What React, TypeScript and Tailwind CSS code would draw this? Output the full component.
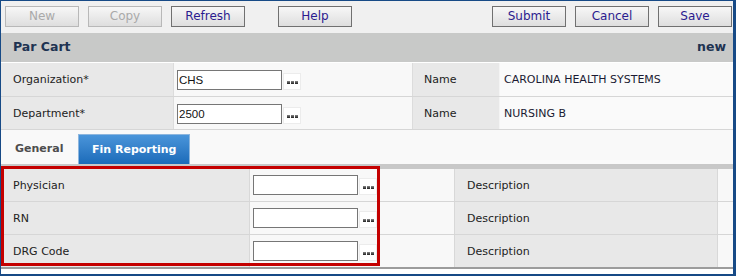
import React from "react";

const cn = (...c: (string | false | undefined)[]) => c.filter(Boolean).join(" ");

function ToolButton({ label, disabled, className }: { label: string; disabled?: boolean; className?: string }) {
  return (
    <button
      className={cn(
        "h-[21px] w-[74px] border bg-linear-to-b from-[#f7f7f7] to-[#dedede] text-[12px] leading-[19px]",
        disabled ? "border-[#b8b8b8] text-[#a9a9a9]" : "border-[#707070] text-[#2b1b8f]",
        className
      )}
    >
      {label}
    </button>
  );
}

function Lookup() {
  return (
    <div className="ml-[1px] flex h-[17px] w-[18px] items-end justify-center gap-[1px] border border-[#ececec] bg-white pb-[5px]">
      <span className="h-[3px] w-[3px] bg-linear-to-b from-[#888] to-[#222]" />
      <span className="h-[3px] w-[3px] bg-linear-to-b from-[#888] to-[#222]" />
      <span className="h-[3px] w-[3px] bg-linear-to-b from-[#888] to-[#222]" />
    </div>
  );
}

function LookupField({ value }: { value?: string }) {
  return (
    <div className="flex items-end">
      <input
        readOnly
        defaultValue={value ?? ""}
        className="h-[20px] w-[105px] border border-[#767676] bg-white px-[1px] font-['Liberation_Sans',sans-serif] text-[11.5px] text-[#111] outline-none"
      />
      <Lookup />
    </div>
  );
}

function HeaderRow({ label, value, name, tall }: { label: string; value: string; name: string; tall?: boolean }) {
  return (
    <div className={cn("flex border-b border-[#d6d6d6] text-[11px]", tall ? "h-[34px]" : "h-[33px]")}>
      <div className="flex w-[173px] items-center border-r border-[#dcdcdc] bg-[#e8e8e8] pl-[12px] pt-[2px] text-[#222]">{label}</div>
      <div className="flex w-[239px] items-center border-r border-[#dcdcdc] bg-[#f8f8f8] pl-[3px] pt-[1px]">
        <LookupField value={value} />
      </div>
      <div className="flex w-[87px] items-center border-r border-[#f4f4f4] bg-[#e8e8e8] pl-[11px] pt-[2px] text-[#222]">Name</div>
      <div className="flex flex-1 items-center bg-[#fafafa] pl-[4px] pt-[2px] text-[#1b1a33]">{name}</div>
    </div>
  );
}

function RefRow({ label, last }: { label: string; last?: boolean }) {
  return (
    <div className={cn("flex text-[11px]", last ? "h-[32px]" : "h-[33px] border-b border-[#d6d6d6]")}>
      <div className="flex w-[249px] items-center border-r border-[#d8d8d8] bg-[#e8e8e8] pl-[12px] pt-[2px] text-[#222]">{label}</div>
      <div className="flex w-[205px] items-center border-r border-[#d8d8d8] bg-[#f8f8f8] pl-[3px]">
        <LookupField />
      </div>
      <div className="flex w-[263px] items-center border-r border-[#d8d8d8] bg-[#e8e8e8] pl-[12px] pt-[2px] text-[#222]">Description</div>
      <div className="flex-1 bg-[#f8f8f8]" />
    </div>
  );
}

export default function App() {
  return (
    <div className="relative h-[276px] w-[736px] overflow-hidden border-t border-l border-r-[3px] border-b-2 border-[#174a86] bg-white font-['DejaVu_Sans',sans-serif]">
      {/* Toolbar */}
      <div className="flex h-[32px] items-start justify-between bg-[#f0f0f0] pt-[5px] pl-[4px] pr-[1px]">
        <div className="flex gap-[9px]">
          <ToolButton label="New" disabled />
          <ToolButton label="Copy" disabled />
          <ToolButton label="Refresh" />
          <ToolButton label="Help" className="ml-[24px]" />
        </div>
        <div className="flex gap-[9px]">
          <ToolButton label="Submit" />
          <ToolButton label="Cancel" />
          <ToolButton label="Save" />
        </div>
      </div>

      {/* Title bar */}
      <div className="flex h-[29px] items-center justify-between bg-[#c8c9c8] pl-[12px] pr-[7px] text-[12.5px] font-bold text-[#1e3352]">
        <span>Par Cart</span>
        <span>new</span>
      </div>
      <div className="h-[1px] bg-white" />

      <HeaderRow label="Organization*" value="CHS" name="CAROLINA HEALTH SYSTEMS" tall />
      <HeaderRow label="Department*" value="2500" name="NURSING B" />

      {/* Tabs */}
      <div className="flex h-[34px] items-end bg-[#f9f9f9] text-[11px] font-bold">
        <div className="flex h-[30px] w-[77px] items-center pl-[14px] pt-[1px] text-[#4d4d4d]">General</div>
        <div className="flex h-[30px] items-center border border-b-0 border-[#8db6de] bg-linear-to-b from-[#4a95da] to-[#1a6bb9] px-[13px] pt-[1px] text-white">
          Fin Reporting
        </div>
      </div>
      <div className="h-[5px] bg-[#c8c8c8]" />

      <RefRow label="Physician" />
      <RefRow label="RN" />
      <RefRow label="DRG Code" last />
      <div className="h-[2px] bg-[#9c9c9c]" />

      {/* Highlight box */}
      <div className="absolute left-0 top-[165px] h-[100px] w-[379px] border-[3px] border-[#c40000]" />
    </div>
  );
}
